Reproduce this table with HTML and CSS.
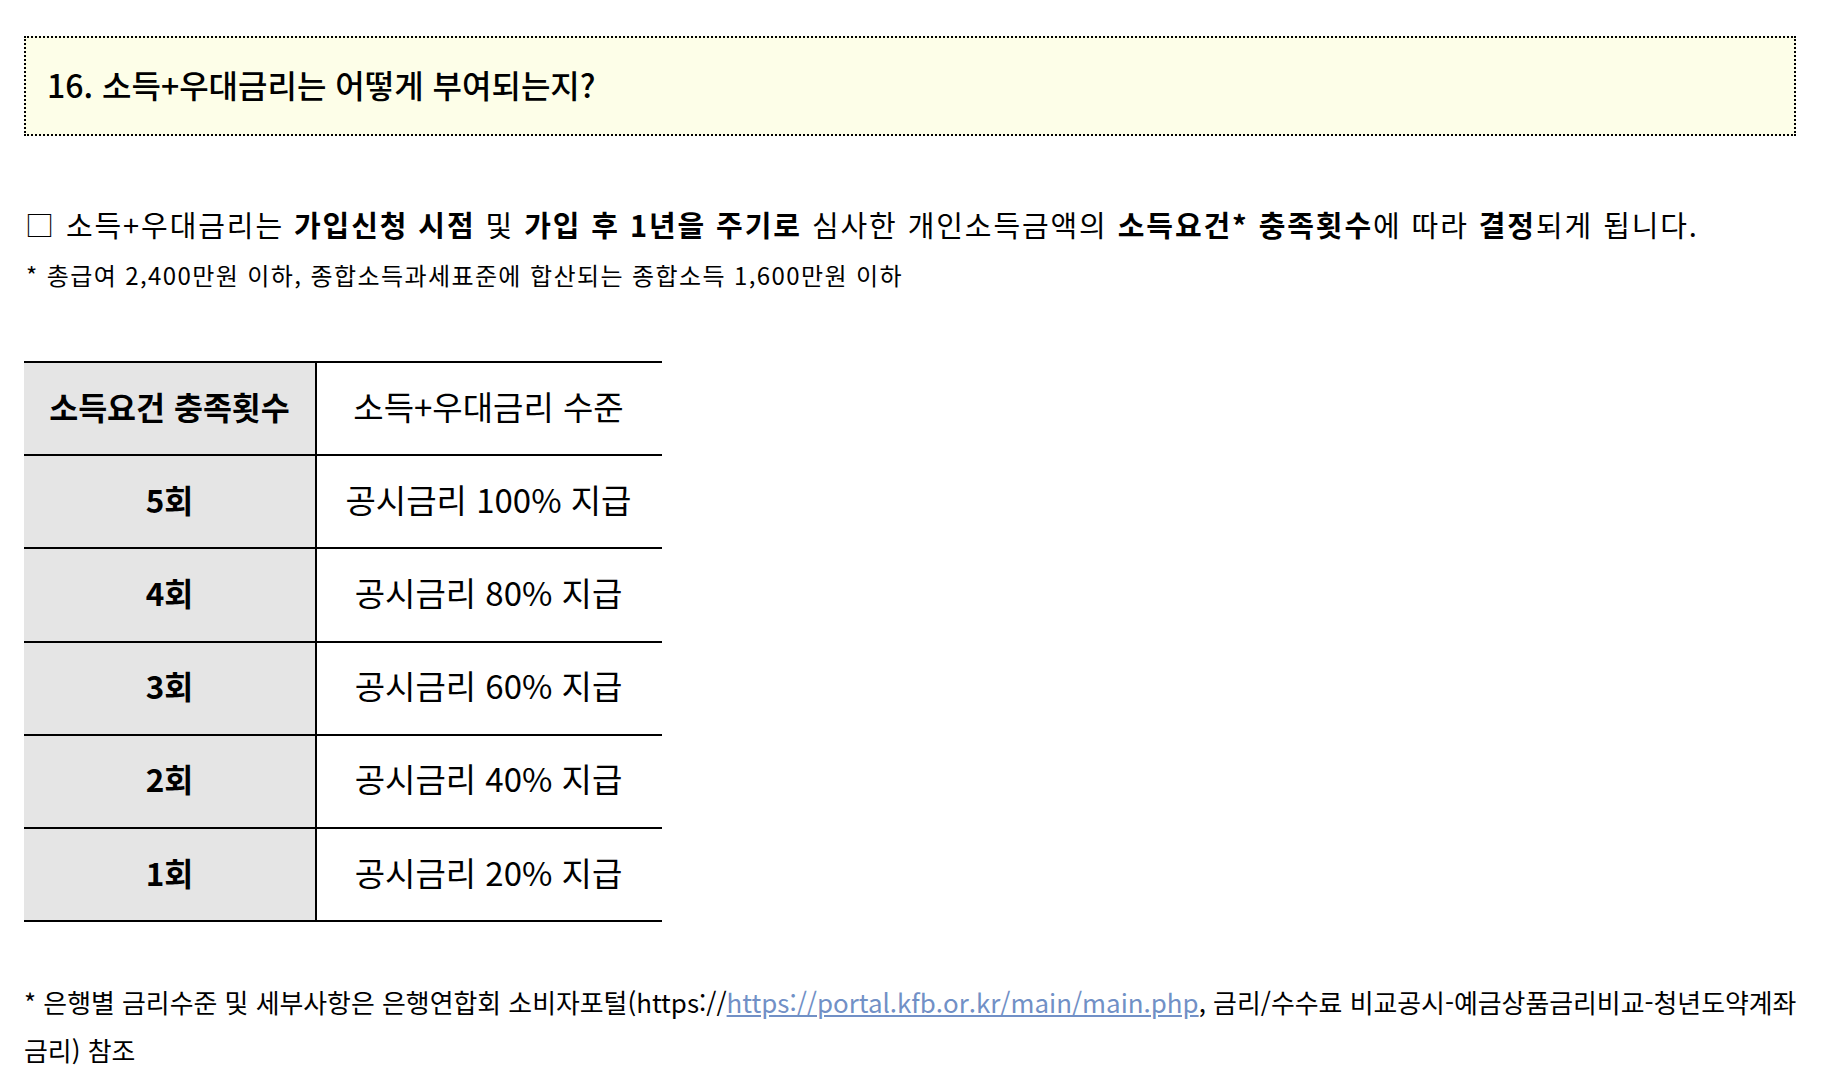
FILE: index.html
```html
<!DOCTYPE html>
<html lang="ko">
<head>
<meta charset="utf-8">
<title>소득+우대금리</title>
<link rel="stylesheet" href="styles.css">
</head>
<body>
<div class="page">
  <div class="qbox">16. 소득+우대금리는 어떻게 부여되는지?</div>

  <p class="lead">□ 소득+우대금리는 <b>가입신청 시점</b> 및 <b>가입 후 1년을 주기로</b> 심사한 개인소득금액의 <b>소득요건* 충족횟수</b>에 따라 <b>결정</b>되게 됩니다.</p>
  <p class="note">* 총급여 2,400만원 이하, 종합소득과세표준에 합산되는 종합소득 1,600만원 이하</p>

  <div class="rate-table">
    <div class="row">
      <div class="c1">소득요건 충족횟수</div>
      <div class="c2">소득+우대금리 수준</div>
    </div>
    <div class="row">
      <div class="c1">5회</div>
      <div class="c2">공시금리 100% 지급</div>
    </div>
    <div class="row">
      <div class="c1">4회</div>
      <div class="c2">공시금리 80% 지급</div>
    </div>
    <div class="row">
      <div class="c1">3회</div>
      <div class="c2">공시금리 60% 지급</div>
    </div>
    <div class="row">
      <div class="c1">2회</div>
      <div class="c2">공시금리 40% 지급</div>
    </div>
    <div class="row">
      <div class="c1">1회</div>
      <div class="c2">공시금리 20% 지급</div>
    </div>
  </div>

  <p class="foot"><span class="line">* 은행별 금리수준 및 세부사항은 은행연합회 소비자포털(https://<a href="#">https://portal.kfb.or.kr/main/main.php</a>, 금리/수수료 비교공시-예금상품금리비교-청년도약계좌</span><br>금리) 참조</p>
</div>
</body>
</html>
```

FILE: styles.css
```css
html, body {
  margin: 0;
  padding: 0;
  background: #ffffff;
}

body {
  font-family: "Noto Sans CJK KR", "Noto Sans", sans-serif;
  color: #000000;
}

.page {
  padding: 36px 27px 0 24px;
}

.qbox {
  height: 92px;
  line-height: 92px;
  padding-bottom: 4px;
  border: 2px dotted #000000;
  background: #fdfee8;
  padding-left: 21px;
  font-size: 32px;
  font-weight: 500;
  white-space: nowrap;
}

.lead {
  margin: 68px 0 0 1px;
  font-size: 29px;
  letter-spacing: 1.9px;
  line-height: 40px;
  white-space: nowrap;
}

.lead b {
  font-weight: 700;
}

.note {
  margin: 16px 0 0 2px;
  font-size: 24px;
  letter-spacing: 1.4px;
  line-height: 30px;
  white-space: nowrap;
}

.rate-table {
  margin-top: 71px;
  width: 638px;
  border-top: 2px solid #000000;
}

.row {
  display: grid;
  grid-template-columns: 293px 343px;
  border-bottom: 2px solid #000000;
  height: 91.2px;
}

.c1 {
  background: #e5e5e5;
  border-right: 2px solid #000000;
  display: flex;
  align-items: center;
  justify-content: center;
  padding-bottom: 6px;
  font-size: 31.5px;
  font-weight: 700;
}

.c2 {
  display: flex;
  align-items: center;
  justify-content: center;
  padding-bottom: 6px;
  font-size: 33px;
}

.foot {
  margin: 56px 0 0 0;
  font-size: 25.9px;
  line-height: 48px;
}

.foot .line {
  white-space: nowrap;
}

.foot a {
  color: #7190c6;
  text-decoration: underline;
}
```
